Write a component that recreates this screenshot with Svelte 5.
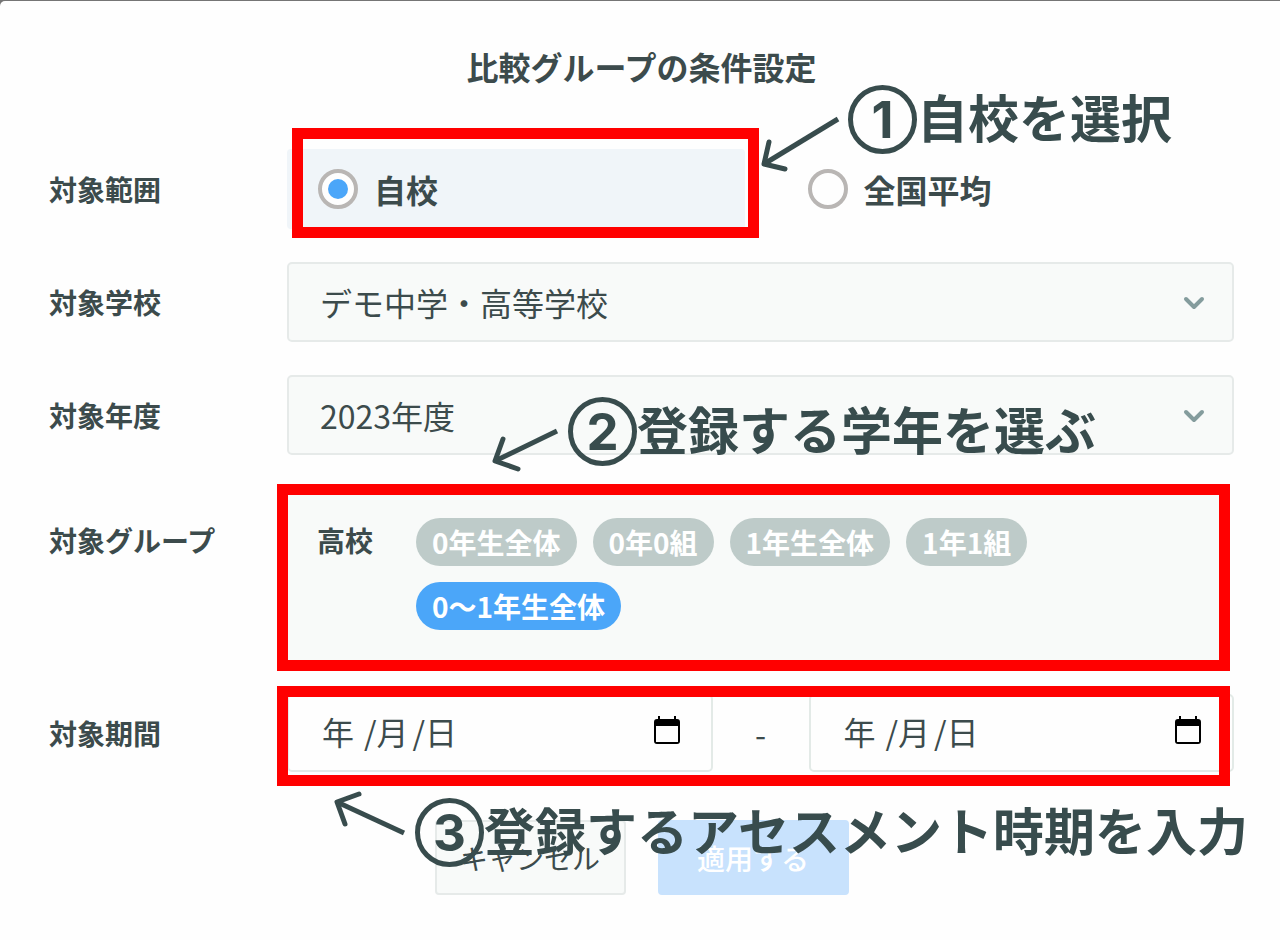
<script lang="ts">
  let scope = 'own';
  let school = 'デモ中学・高等学校';
  let year = '2023年度';
  let selectedGroup = '0〜1年生全体';

  const scopes = [
    { value: 'own', label: '自校' },
    { value: 'national', label: '全国平均' },
  ];
  const groups = ['0年生全体', '0年0組', '1年生全体', '1年1組', '0〜1年生全体'];
  const dates = [
    { id: 'from', label: '開始日', year: '年', month: '月', day: '日' },
    { id: 'to', label: '終了日', year: '年', month: '月', day: '日' },
  ];
</script>

<main class="modal">
  <h1>比較グループの条件設定</h1>

  <form on:submit|preventDefault>
    <div class="row">
      <span class="label" id="scope-label">対象範囲</span>
      <div class="field scopes" role="radiogroup" aria-labelledby="scope-label">
        {#each scopes as item (item.value)}
          <label class="scope" class:checked={scope === item.value}>
            <input type="radio" name="scope" value={item.value} bind:group={scope} />
            {item.label}
            {#if item.value === 'own'}
              <span class="frame frame-scope"></span>
            {/if}
          </label>
        {/each}
        <div class="note note-scope">
          <svg width="87" height="69" viewBox="0 0 87 69" aria-hidden="true">
            <path d="M77 34 L3 79" />
            <path class="head" d="M8 57 L3 79 L24 84" />
          </svg>
          <span class="number">1</span>
          <span class="text">自校を選択</span>
        </div>
      </div>
    </div>

    <div class="row">
      <label class="label" for="school">対象学校</label>
      <div class="field">
        <select id="school" bind:value={school}>
          <option>デモ中学・高等学校</option>
        </select>
        <svg class="chevron" width="22" height="14" viewBox="0 0 22 14" aria-hidden="true">
          <path d="M3 3 L11 11 L19 3" />
        </svg>
      </div>
    </div>

    <div class="row">
      <label class="label" for="year">対象年度</label>
      <div class="field">
        <select id="year" bind:value={year}>
          <option>2023年度</option>
        </select>
        <svg class="chevron" width="22" height="14" viewBox="0 0 22 14" aria-hidden="true">
          <path d="M3 3 L11 11 L19 3" />
        </svg>
        <div class="note note-year">
          <svg width="77" height="69" viewBox="0 0 77 69" aria-hidden="true">
            <path d="M66 34 L4 64" />
            <path class="head" d="M12 42 L4 64 L27 72" />
          </svg>
          <span class="number">2</span>
          <span class="text">登録する学年を選ぶ</span>
        </div>
      </div>
    </div>

    <div class="row top">
      <span class="label">対象グループ</span>
      <div class="field">
        <div class="panel">
          <span class="stage">高校</span>
          <div class="chips">
            {#each groups as group (group)}
              <button
                type="button"
                class="chip"
                class:selected={selectedGroup === group}
                on:click={() => (selectedGroup = group)}>{group}</button>
            {/each}
          </div>
        </div>
        <span class="frame frame-groups"></span>
      </div>
    </div>

    <div class="row">
      <span class="label">対象期間</span>
      <div class="field period">
        {#each dates as date, i (date.id)}
          {#if i > 0}
            <span class="dash">-</span>
          {/if}
          <div class="date" role="group" aria-label={date.label}>
            <input class="year" aria-label="年" bind:value={date.year} />
            <span>/</span>
            <input aria-label="月" bind:value={date.month} />
            <span>/</span>
            <input aria-label="日" bind:value={date.day} />
            <button type="button" class="calendar" aria-label="カレンダーを開く">
              <svg width="26" height="28" viewBox="0 0 26 28" aria-hidden="true">
                <path
                  fill-rule="evenodd"
                  d="M4 0 H6 V3 H20 V0 H22 V3 H23 Q26 3 26 6 V25 Q26 28 23 28 H3 Q0 28 0 25 V6 Q0 3 3 3 H4 Z M2 10 V26 H24 V10 Z"
                />
              </svg>
            </button>
          </div>
        {/each}
        <span class="frame frame-period"></span>
        <div class="note note-period">
          <svg width="82" height="69" viewBox="0 0 82 69" aria-hidden="true">
            <path d="M71 35 L4 4" />
            <path class="head" d="M26 -4 L4 4 L12 26" />
          </svg>
          <span class="number">3</span>
          <span class="text">登録するアセスメント時期を入力</span>
        </div>
      </div>
    </div>

    <div class="actions">
      <button type="button" class="cancel">キャンセル</button>
      <button type="submit" class="apply">適用する</button>
    </div>
  </form>
</main>

<style>
  :global(body) {
    background: #757575;
  }

  .modal {
    box-sizing: border-box;
    min-height: calc(100vh - 1px);
    margin-top: 1px;
    padding: 41px 46px 45px 49px;
    overflow: hidden;
    border-top-left-radius: 5px;
    background: #fefefe;
    color: #3c4b4c;
    font-family: "Noto Sans CJK JP", sans-serif;
  }

  h1 {
    margin: 0 0 59px;
    font-size: 32px;
    line-height: 48px;
    text-align: center;
  }

  form {
    display: flex;
    flex-direction: column;
    gap: 33px;
  }

  input,
  select,
  button {
    box-sizing: border-box;
    margin: 0;
    color: inherit;
    font-family: inherit;
  }

  .row {
    display: grid;
    grid-template-columns: 238px 1fr;
    align-items: center;
  }

  .row.top {
    align-items: start;
  }

  .label {
    font-size: 28px;
    font-weight: 700;
    line-height: 48px;
  }

  .top .label {
    padding-top: 28px;
  }

  .field {
    position: relative;
    min-width: 0;
  }

  .scopes {
    display: grid;
    grid-template-columns: 1fr 1fr;
    gap: 32px;
  }

  .scope {
    position: relative;
    display: flex;
    align-items: center;
    gap: 16px;
    height: 80px;
    padding-left: 31px;
    box-sizing: border-box;
    border-radius: 4px;
    font-size: 32px;
    font-weight: 700;
  }

  .scope.checked {
    background: #f0f5f9;
  }

  .scope input {
    display: grid;
    place-items: center;
    width: 40px;
    height: 40px;
    appearance: none;
    border: 4px solid #b9b6b4;
    border-radius: 50%;
    background: #fefefe;
  }

  .scope input:checked::before {
    content: "";
    width: 20px;
    height: 20px;
    border-radius: 50%;
    background: #4ba6f9;
  }

  select {
    display: block;
    width: 100%;
    height: 80px;
    padding: 0 80px 0 31px;
    appearance: none;
    border: 2px solid #e6eae9;
    border-radius: 5px;
    background: #f8faf9;
    font-size: 32px;
  }

  .chevron {
    position: absolute;
    top: 34px;
    right: 29px;
    fill: none;
    stroke: #849c9d;
    stroke-width: 4;
    stroke-linecap: round;
    stroke-linejoin: round;
    pointer-events: none;
  }

  .panel {
    display: flex;
    margin-right: 4px;
    padding: 30px 26px 31px 30px;
    background: #f8faf9;
  }

  .stage {
    flex: 0 0 99px;
    font-size: 28px;
    font-weight: 700;
    line-height: 44px;
  }

  .chips {
    display: flex;
    flex-wrap: wrap;
    gap: 16px;
  }

  .chip {
    height: 48px;
    padding: 0 16px;
    border: none;
    border-radius: 24px;
    background: #becbc9;
    color: #fff;
    font-size: 28px;
    font-weight: 700;
    line-height: 48px;
    cursor: pointer;
  }

  .chip.selected {
    background: #4ba6f9;
  }

  .period {
    display: grid;
    grid-template-columns: 1fr 96px 1fr;
    align-items: center;
  }

  .date {
    display: flex;
    align-items: center;
    height: 78px;
    padding: 0 31px 4px 33px;
    box-sizing: border-box;
    border: 2px solid #e3eae7;
    border-radius: 5px;
    font-size: 32px;
  }

  .date input {
    width: 36px;
    padding: 0;
    border: none;
    background: none;
    font-size: 32px;
  }

  .date .year {
    width: 42px;
  }

  .calendar {
    display: flex;
    margin-left: auto;
    padding: 0 0 2px;
    border: none;
    background: none;
    color: #000;
    cursor: pointer;
  }

  .dash {
    font-size: 32px;
    text-align: center;
  }

  .actions {
    display: flex;
    justify-content: center;
    gap: 32px;
    margin-top: 15px;
  }

  .actions button {
    width: 191px;
    height: 75px;
    padding: 0;
    border: 2px solid #e6eae9;
    border-radius: 4px;
    background: #f8faf9;
    font-size: 28px;
    cursor: pointer;
  }

  .actions .apply {
    border-color: #c8e2fd;
    background: #c8e2fd;
    color: #fff;
    font-weight: 500;
  }

  /* highlight frames and callouts lie over the form */
  .frame {
    position: absolute;
    border: 11px solid #f00;
    pointer-events: none;
  }

  .frame-scope {
    inset: -21px -14px -9px 5px;
  }

  .frame-groups {
    inset: -4px 4px -10px -10px;
  }

  .frame-period {
    inset: -8px 4px -14px -10px;
  }

  .note {
    position: absolute;
    z-index: 1;
    display: flex;
    height: 69px;
    color: #384c4d;
    font-weight: 700;
    white-space: nowrap;
    pointer-events: none;
  }

  .note svg {
    flex: none;
    overflow: visible;
    fill: none;
    stroke: currentColor;
    stroke-width: 5;
  }

  .note .head {
    stroke-linecap: round;
    stroke-linejoin: round;
  }

  .number {
    display: flex;
    align-items: center;
    justify-content: center;
    width: 69px;
    height: 69px;
    box-sizing: border-box;
    border: 5px solid currentColor;
    border-radius: 50%;
    font-family: Inter, "Liberation Sans", sans-serif;
    font-size: 51px;
  }

  .text {
    font-size: 51px;
    line-height: 63px;
  }

  .note-scope {
    top: -64px;
    left: 474px;
  }

  .note-year {
    top: 22px;
    left: 204px;
  }

  .note-period {
    top: 104px;
    left: 46px;
  }
</style>
